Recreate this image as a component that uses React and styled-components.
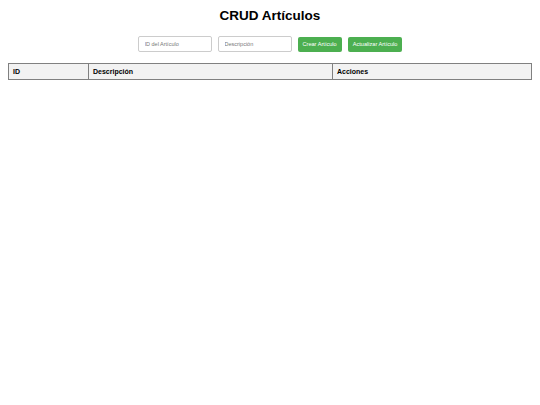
import styled, { createGlobalStyle } from 'styled-components'

const GlobalStyle = createGlobalStyle`
    body {
        margin: 0;
        padding: 8px;
        font-family: "Liberation Sans", Arial, sans-serif;
        background: #fff;
        color: #000;
    }
`

const Title = styled.h1`
    margin: 0 0 12px;
    text-align: center;
    font-size: 13.5px;
    font-weight: bold;
    line-height: 16px;
`

const Form = styled.div`
    display: flex;
    justify-content: center;
    align-items: center;
    gap: 6px;
    margin-bottom: 11px;
`

const Input = styled.input`
    box-sizing: border-box;
    width: 74px;
    height: 16px;
    padding: 0 6px;
    border: 1px solid #ccc;
    border-radius: 2px;
    font-family: inherit;
    font-size: 5.5px;
    outline: none;

    &::placeholder {
        color: #777;
    }
`

const Button = styled.button`
    box-sizing: border-box;
    height: 15px;
    padding: 0 5px;
    border: none;
    border-radius: 2px;
    background: #4caf50;
    color: #fff;
    font-family: inherit;
    font-size: 5.6px;
    cursor: pointer;
`

const Table = styled.table`
    width: 100%;
    border-collapse: collapse;
    table-layout: fixed;
`

const Th = styled.th`
    width: ${(p) => p.$w};
    box-sizing: border-box;
    height: 16px;
    padding: 0 4px;
    border: 1px solid #808080;
    background: #f2f2f2;
    text-align: left;
    font-size: 7px;
    font-weight: bold;
`

const App = () => {
    return (
        <>
            <GlobalStyle />
            <Title>CRUD Artículos</Title>
            <Form>
                <Input placeholder="ID del Artículo" />
                <Input placeholder="Descripción" />
                <Button>Crear Artículo</Button>
                <Button>Actualizar Artículo</Button>
            </Form>
            <Table>
                <thead>
                    <tr>
                        <Th $w="80px">ID</Th>
                        <Th $w="244px">Descripción</Th>
                        <Th>Acciones</Th>
                    </tr>
                </thead>
                <tbody></tbody>
            </Table>
        </>
    )
}

export default App
